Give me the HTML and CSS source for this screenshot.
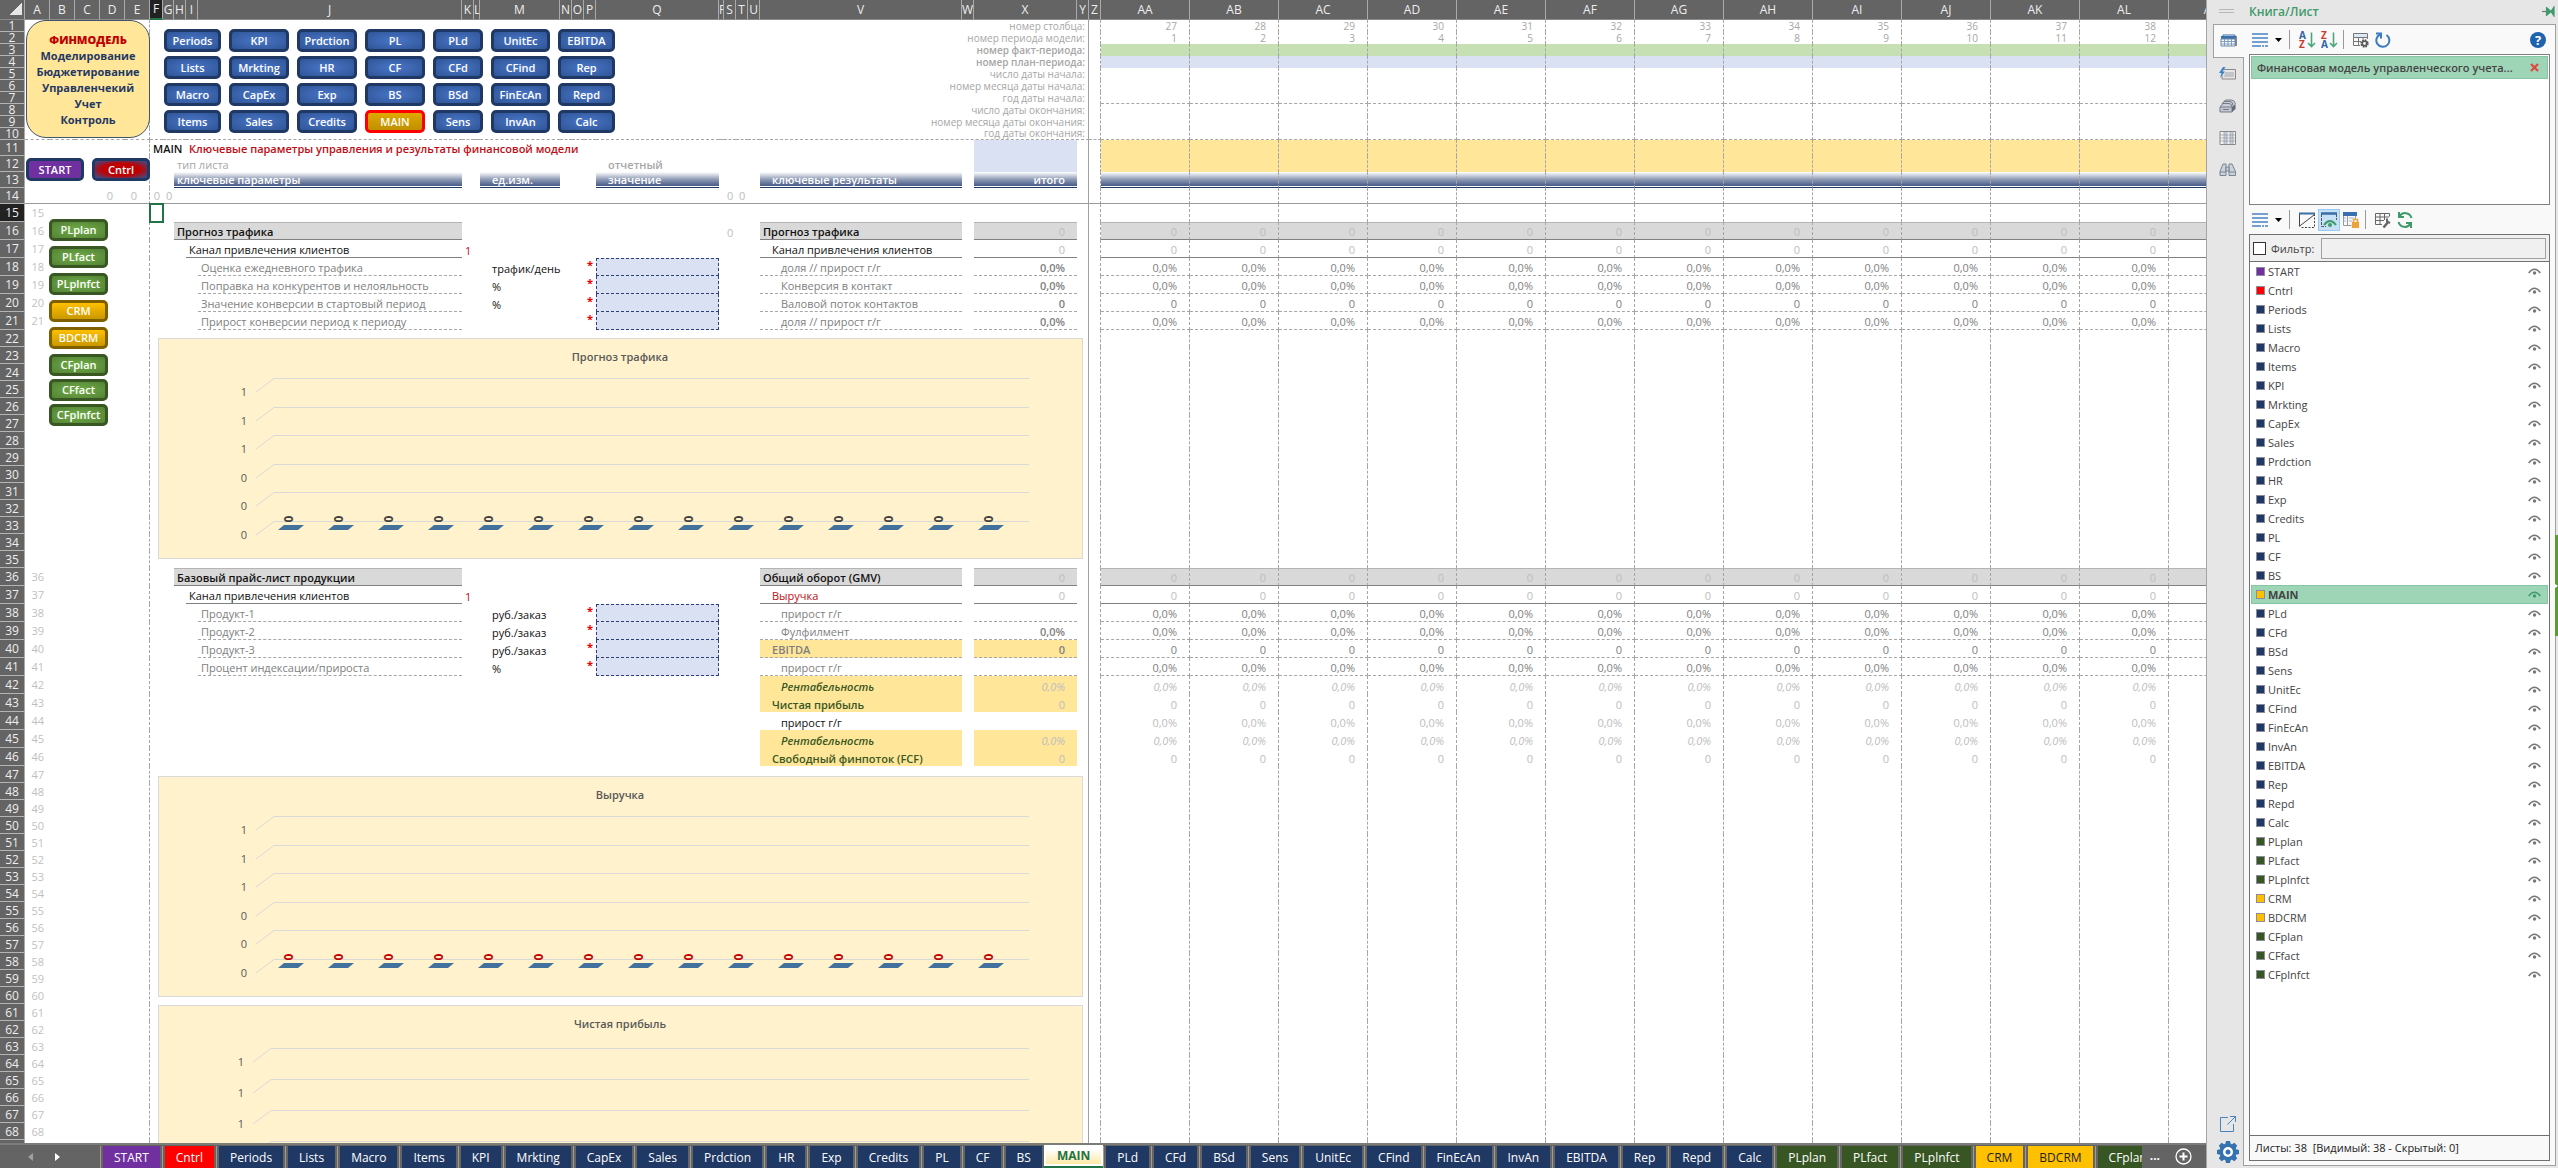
FILE: index.html
```html
<!DOCTYPE html>
<html lang="ru">
<head>
    <meta charset="UTF-8">
    <meta name="viewport" content="width=device-width, initial-scale=1.0">
    <title>Финансовая модель управленческого учета</title>
    <link rel="stylesheet" href="styles.css">
</head>
<body>
    <main class="workbook">
        <div class="sheet">
            <table class="grid">
                <colgroup id="cols"></colgroup>
                <thead><tr id="letters"></tr></thead>
                <tbody id="rows"></tbody>
            </table>

            <!-- shapes floating over the cells -->
            <div class="logo">
                <strong>ФИНМОДЕЛЬ</strong>
                <span>Моделирование</span>
                <span>Бюджетирование</span>
                <span>Управленчекий</span>
                <span>Учет</span>
                <span>Контроль</span>
            </div>
            <nav class="shape-nav" id="shape-nav"></nav>
            <div class="shape-home">
                <button class="shape purple" type="button">START</button>
                <button class="shape red" type="button">Cntrl</button>
            </div>
            <nav class="shape-side">
                <div class="shape-group">
                    <button class="shape green" type="button">PLplan</button>
                    <button class="shape green" type="button">PLfact</button>
                    <button class="shape green" type="button">PLplnfct</button>
                    <button class="shape gold" type="button">CRM</button>
                    <button class="shape gold" type="button">BDCRM</button>
                </div>
                <div class="shape-group close">
                    <button class="shape green" type="button">CFplan</button>
                    <button class="shape green" type="button">CFfact</button>
                    <button class="shape green" type="button">CFplnfct</button>
                </div>
            </nav>
        </div>

        <div class="tabbar">
            <div class="tab-scroll">
                <button type="button" class="dim" aria-label="Назад"><svg width="5" height="8" viewBox="0 0 5 8"><path d="M5 0v8L0 4z"/></svg></button>
                <button type="button" aria-label="Вперед"><svg width="5" height="8" viewBox="0 0 5 8"><path d="M0 0v8l5-4z"/></svg></button>
            </div>
            <nav class="tabs" id="tabs"></nav>
            <span class="more">...</span>
            <button type="button" class="add-sheet" aria-label="Новый лист">
                <svg width="17" height="17" viewBox="0 0 17 17" fill="none" stroke="#fff"><circle cx="8.500" cy="8.500" r="7.500" stroke-width="1.300"/><path d="M4.500 8.500h8M8.500 4.500v8" stroke-width="2"/></svg>
            </button>
        </div>
    </main>

    <aside class="pane">
        <header class="pane-head">
            <span class="grip"></span>
            <h1>Книга/Лист</h1>
            <button type="button" aria-label="Закрепить">
                <svg width="13" height="11" viewBox="0 0 13 11"><path d="M0 5.500h5" stroke="#777" stroke-width="1.200"/><path d="M4.500 1v9M5 2l4 3.500L12 1v9L9 5.500 5 9z" fill="#3f9a6b" stroke="#3f9a6b" stroke-width="1.200"/></svg>
            </button>
        </header>

        <div class="pane-main">
            <div class="rail">
                <button type="button" class="active" aria-label="Книги">
                    <svg width="18" height="16" viewBox="0 0 18 16"><path d="M4 3h13v10H4z" fill="#8a8a8a"/><path d="M3 2h12v10H3z" fill="#fff" stroke="#3a6ea5"/><path d="M1 3h14v3H1z" fill="#3a70b0"/><path d="M1 6h14v7H1z" fill="#fff" stroke="#6f88a5"/><path d="M1 8.500h14M1 11h14M4.500 6v7M8 6v7M11.500 6v7" stroke="#7d9cc0"/></svg>
                </button>
                <button type="button" aria-label="Диапазоны">
                    <svg width="18" height="14" viewBox="0 0 18 14"><path d="M4 2.500h12.500v9.500H3V8" fill="none" stroke="#888"/><path d="M6 5h9v5H5z" fill="#c4c4c8"/><path d="M4 0L0 6h2.500L1 11l5-6.500H3.500L6.500 0z" fill="#3f7fc8"/></svg>
                </button>
                <button type="button" aria-label="Печать">
                    <svg width="18" height="14" viewBox="0 0 18 14"><path d="M5.500 1h7l4 4v5l-3 3H1V8z" fill="#c9ced8"/><path d="M1 8h12v5H1z" fill="#c2c7d2" stroke="#777c88"/><path d="M13 8l3.500-3v5L13 13z" fill="#666b78"/><path d="M1 8l3-3.500h6q3 0 3 3.500M3 5l2-2.500h6q3 0 3 4M5 2.500L6.500 1h6q3 0 4 4" fill="none" stroke="#777c88"/><path d="M4 10.500h6" stroke="#777c88"/></svg>
                </button>
                <button type="button" aria-label="Столбцы">
                    <svg width="18" height="14" viewBox="0 0 18 14"><path d="M1 .5h15.500v13H1z" fill="#f4f4f4" stroke="#888"/><path d="M5 1h3v12H5zM11 1h3v12h-3z" fill="#c3d2e4"/><path d="M1 4h15M1 7h15M1 10h15M5 1v12M8 1v12M11 1v12M14 1v12" stroke="#999" stroke-width=".7"/></svg>
                </button>
                <button type="button" aria-label="Поиск">
                    <svg width="18" height="14" viewBox="0 0 18 14" fill="#c9d3de" stroke="#7b8490"><path d="M1 12.500v-4L4 1h3v11.500zM10 12.500V1h3l3.500 7.500v4z"/><path d="M7 4h3v4H7zM1 9h6M10 9h6.500"/></svg>
                </button>
                <span class="rail-space"></span>
                <button type="button" class="low" aria-label="Открыть">
                    <svg width="18" height="18" viewBox="0 0 18 18" fill="none" stroke="#4a82bd"><path d="M9 2.500H1.500v14h13V9M8.500 9.500l8-8M11 1.500h5.500V7"/></svg>
                </button>
                <button type="button" class="low" aria-label="Настройки">
                    <svg width="24" height="24" viewBox="0 0 24 24"><g fill="#3572b0"><circle cx="12" cy="12" r="8.500"/><path id="cog" d="M10 1h4l1 4H9zM10 23h4l1-4H9z"/><use href="#cog" transform="rotate(45 12 12)"/><use href="#cog" transform="rotate(90 12 12)"/><use href="#cog" transform="rotate(135 12 12)"/></g><circle cx="12" cy="12" r="5" fill="#fff"/><circle cx="12" cy="12" r="2.500" fill="#3572b0"/></svg>
                </button>
            </div>

            <div class="pane-body">
                <div class="toolbar">
                    <button type="button" aria-label="Список"><svg width="16" height="16" viewBox="0 0 16 16" stroke="#4a80c4" stroke-width="1.700"><path d="M0 2h16M0 6h16M0 10h16"/><path d="M0 14h16" stroke-dasharray="9 1 2 1"/></svg></button>
                    <button type="button" class="caret" aria-label="Меню"><svg width="7" height="4" viewBox="0 0 7 4"><path d="M0 0h7L3.500 4z"/></svg></button>
                    <span class="sep"></span>
                    <button type="button" aria-label="По возрастанию"><svg width="17" height="18" viewBox="0 0 17 18"><text class="az blue" x="0" y="8">A</text><text class="az red" x="0" y="17">Z</text><path d="M12.500 1.500v14M9 12l3.500 3.500L16 12" fill="none" stroke="#4aa77c" stroke-width="1.600"/></svg></button>
                    <button type="button" aria-label="По убыванию"><svg width="17" height="18" viewBox="0 0 17 18"><text class="az red" x="0" y="8">Z</text><text class="az blue" x="0" y="17">A</text><path d="M12.500 1.500v14M9 12l3.500 3.500L16 12" fill="none" stroke="#4aa77c" stroke-width="1.600"/></svg></button>
                    <span class="sep"></span>
                    <button type="button" aria-label="Параметры"><svg width="16" height="16" viewBox="0 0 16 16" fill="none" stroke="#777"><path d="M.5 1.500h14v4H.5z" fill="#dbe9f7"/><path d="M.5 5.500v8H7M.5 9.500H8M5.500 5.500v8M10 5.500V7M14.500 5.500V7"/><circle cx="11.500" cy="11.500" r="3.200" stroke="#555" stroke-width="2" stroke-dasharray="1.600 .9"/><circle cx="11.500" cy="11.500" r="2.200" stroke="#555" stroke-width="1.500"/></svg></button>
                    <button type="button" aria-label="Обновить"><svg width="16" height="16" viewBox="0 0 16 16" fill="none" stroke="#3b7cc0" stroke-width="2"><path d="M5 2.500a6.500 6.500 0 1 0 6.500.5"/><path d="M1 1.500h5v5"/></svg></button>
                    <button type="button" class="help" aria-label="Справка">?</button>
                </div>

                <ul class="books">
                    <li>
                        <span>Финансовая модель управленческого учета...</span>
                        <button type="button" aria-label="Закрыть"><svg width="9" height="9" viewBox="0 0 9 9"><path d="M1 1l7 7M8 1L1 8" stroke="#e0483e" stroke-width="2.200"/></svg></button>
                    </li>
                </ul>

                <div class="toolbar">
                    <button type="button" aria-label="Список"><svg width="16" height="16" viewBox="0 0 16 16" stroke="#4a80c4" stroke-width="1.700"><path d="M0 2h16M0 6h16M0 10h16"/><path d="M0 14h16" stroke-dasharray="9 1 2 1"/></svg></button>
                    <button type="button" class="caret" aria-label="Меню"><svg width="7" height="4" viewBox="0 0 7 4"><path d="M0 0h7L3.500 4z"/></svg></button>
                    <span class="sep"></span>
                    <button type="button" aria-label="Скрыть"><svg width="16" height="16" viewBox="0 0 16 16" fill="none" stroke="#444"><path d="M.5 14V2M15.500 2v13.500H1" stroke-dasharray="2 1.500"/><path d="M0 14.500L15 3M.5 14V2"/><path d="M0 1.500h16" stroke="#3a6ea5" stroke-width="2"/></svg></button>
                    <button type="button" class="on" aria-label="Показать"><svg width="16" height="16" viewBox="0 0 16 16" fill="none" stroke="#555"><path d="M.5 2v12.500H5M15.500 2v6" stroke-dasharray="3 1"/><path d="M0 1.500h16" stroke="#3a6ea5" stroke-width="2.500"/><path d="M3 13q6-8 12 0" stroke="#3f9a6b" stroke-width="2"/><circle cx="9" cy="13" r="2" fill="#3f9a6b" stroke="none"/></svg></button>
                    <button type="button" aria-label="Защитить"><svg width="16" height="16" viewBox="0 0 16 16"><path d="M.5 2v11.500h8M4.500 3v10M12.500 3v4" fill="none" stroke="#999"/><path d="M0 0h14v4H0z" fill="#3a70b0"/><path d="M1 6h2M1 9h2M6 6h5M6 9h3" stroke="#9fb8d8"/><path d="M9 10h7v6H9z" fill="#eba43c"/><path d="M10.500 10V7.500h4V10" fill="none" stroke="#eba43c" stroke-width="1.500"/></svg></button>
                    <span class="sep"></span>
                    <button type="button" aria-label="Таблица"><svg width="16" height="16" viewBox="0 0 16 16" fill="none" stroke="#666"><path d="M.5 1.500h14v3M.5 1.500v11H7M.5 5H14M.5 8.500H9M5 1.500v11M9.500 1.500V8"/><path d="M8.500 15.500l5-6" stroke-width="2.500"/><path d="M12 6.500v3l3 1.500" stroke-width="2"/></svg></button>
                    <button type="button" aria-label="Обновить листы"><svg width="16" height="16" viewBox="0 0 16 16" fill="none" stroke="#3f9a6b" stroke-width="2"><path d="M14.500 6A6.500 6.500 0 0 0 2.500 4.500M1.500 10a6.500 6.500 0 0 0 12 1.500"/><path d="M2 0v5h5M14 16v-5H9"/></svg></button>
                </div>

                <div class="sheets-box">
                    <form class="filter">
                        <input type="checkbox" id="filter-on">
                        <label for="filter-on">Фильтр:</label>
                        <input type="text" id="filter-text" aria-label="Текст фильтра">
                    </form>
                    <ul class="sheet-list" id="sheet-list"></ul>
                    <p class="status">Листы: 38&nbsp; [Видимый: 38 - Скрытый: 0]</p>
                </div>
            </div>
        </div>
        <span class="edge-handle"><svg width="3" height="4" viewBox="0 0 3 4"><path d="M0 0l3 2-3 2z" fill="#fff"/></svg></span>
    </aside>
    <script src="script.js"></script>
</body>
</html>
```

FILE: styles.css
```css
* {
    box-sizing: border-box;
}
body {
    margin: 0;
    display: flex;
    height: 100vh;
    overflow: hidden;
    font-family: "Open Sans", "Noto Sans", sans-serif;
    font-size: 11px;
    color: #111;
    background: #fff;
}
button {
    font: inherit;
    color: inherit;
    border: 0;
    padding: 0;
    background: none;
}
svg {
    display: block;
}

/* workbook */
.workbook {
    flex: 1;
    min-width: 0;
    display: flex;
    flex-direction: column;
}
.sheet {
    flex: 1;
    min-height: 0;
    position: relative;
    overflow: hidden;
}
.grid {
    table-layout: fixed;
    width: 1px;
    border-collapse: separate;
    border-spacing: 0;
}
.grid th {
    padding: 0;
    font-size: 12px;
    font-weight: normal;
    color: #eee;
    background: #646464;
    text-align: center;
    white-space: nowrap;
}
.grid thead th {
    height: 19px;
    line-height: 18px;
    border-right: 1px solid #aaa;
    border-bottom: 1px solid #8a8a8a;
    overflow: hidden;
}
.grid thead .corner {
    background: linear-gradient(135deg, #646464 50%, #e6e6e6 50%);
    background-size: 12px 12px;
    background-repeat: no-repeat;
    background-position: 10px 3px;
    background-color: #646464;
}
.grid tbody th {
    line-height: 11px;
    border-bottom: 1px solid #b4b4b4;
    border-right: 1px solid #aaa;
}
.grid thead th.current {
    background: #222;
    border-bottom: 2px solid #217346;
}
.grid tbody th.current {
    background: #222;
}
.grid td {
    padding: 0 3px;
    line-height: 14px;
    vertical-align: bottom;
    white-space: nowrap;
}
.grid td.rownum {
    padding: 0 6px 0 0;
    text-align: right;
    vertical-align: middle;
    color: #bfbfbf;
}
.grid .tiny td {
    font-size: 10px;
    line-height: 11px;
    color: #a6a6a6;
}
.grid td.dash-right {
    border-right: 1px dashed #a6a6a6;
}
.grid td.freeze {
    border-right: 1px solid #a0a0a0;
}
.grid .row-10 td,
.grid .row-7 td.period {
    border-bottom: 1px dashed #a6a6a6;
}
.grid .row-14 td {
    border-bottom: 1px solid #9a9a9a;
}
.grid td.selected {
    outline: 2px solid #217346;
    outline-offset: -1px;
}

/* cell styles */
.grid td.num {
    text-align: right;
    padding-right: 12px;
}
.grid td.tight {
    text-align: right;
    padding-right: 3px;
}
.grid td.ind1 { padding-left: 12px; }
.grid td.ind2 { padding-left: 21px; }
.grid td.b { font-weight: 600; }
.grid td.i { font-style: italic; }
.grid td.light { color: #bdbdbd; }
.grid td.gray { color: #808080; }
.grid td.mid { color: #a6a6a6; }
.grid td.red { color: #c00d14; }
.grid td.green-text { color: #385723; }
.grid td.fill-green { background: #c6e0b4; }
.grid td.fill-blue { background: #d9e1f2; }
.grid td.fill-yellow { background: #ffe699; }
.grid td.head {
    color: #fff;
    font-weight: 600;
    background: linear-gradient(#fff, #8d9ab5 50%, #3c5180);
    border-bottom: 1px solid #1f3864;
    box-shadow: inset 0 -1px #fff;
}
.grid td.group {
    background: #d9d9d9;
    border-top: 1px solid #b4b4b4;
    border-bottom: 1px solid #808080;
}
.grid td.line { border-bottom: 1px solid #808080; }
.grid td.dash { border-bottom: 1px dashed #a6a6a6; }
.grid td.input {
    background: #d9e1f2;
    border: 1px dashed #2f3f78;
    border-top: 0;
}
.grid td.input.first {
    border-top: 1px dashed #2f3f78;
}
.grid td.star {
    color: #e00;
    font-weight: bold;
    padding: 0 3px 0 0;
    text-align: right;
    vertical-align: top;
}

/* charts */
.grid td.chart-cell {
    padding: 8px 5px 9px 8px;
    vertical-align: top;
}
.grid td.chart-cell.low {
    padding: 10px 5px 7px 8px;
}
.grid td.chart-cell.high {
    padding: 1px 5px 0 8px;
}
.chart {
    background: #fff2cc;
    border: 1px solid #d9d9d9;
    font-size: 11px;
    fill: #595959;
}
.chart .title { font-weight: 600; text-anchor: middle; }
.chart .axis { text-anchor: middle; }
.chart .wall { fill: none; stroke: #d9d9d9; }
.chart .bar { fill: #41719c; }
.chart .value {
    font-size: 12px;
    font-weight: bold;
    text-anchor: middle;
    fill: #404040;
}
.chart .value.red { fill: #c00000; }

/* floating shapes */
.logo {
    position: absolute;
    left: 26px;
    top: 20px;
    width: 124px;
    height: 118px;
    display: flex;
    flex-direction: column;
    justify-content: center;
    align-items: center;
    line-height: 16px;
    padding-top: 2px;
    font-weight: bold;
    color: #1f3864;
    background: #ffe699;
    border: 1px solid #44546a;
    border-radius: 20px;
}
.logo strong {
    color: #c00000;
}
.shape-nav {
    position: absolute;
    left: 164px;
    top: 29px;
    display: grid;
    grid-template-columns: 57px 60px 60px 60px 50px 59px 57px;
    grid-auto-rows: 23px;
    gap: 4px 8px;
}
.shape-home {
    position: absolute;
    left: 26px;
    top: 158px;
    display: flex;
    gap: 8px;
}
.shape-home .shape {
    width: 58px;
    height: 23px;
}
.shape-side {
    position: absolute;
    left: 49px;
    top: 219px;
    width: 59px;
    display: flex;
    flex-direction: column;
    gap: 5px;
}
.shape-group {
    display: flex;
    flex-direction: column;
    gap: 5px;
}
.shape-group.close {
    gap: 3px;
}
.shape-group .shape {
    height: 22px;
}
.shape {
    color: #fff;
    font-weight: 600;
    line-height: 14px;
    border: 3px solid #1f3864;
    border-radius: 5px;
    background: radial-gradient(#4a76c8, #2f5597);
}
.shape.purple { background: #7030a0; }
.shape.red { background: radial-gradient(#c00000 50%, #2f5597); }
.shape.green {
    border-color: #385723;
    background: radial-gradient(#70ad47, #548235);
}
.shape.gold {
    border-color: #7f6000;
    background: linear-gradient(#ffc000, #c99700);
}
.shape.here {
    border-color: #f00;
    background: linear-gradient(#e0a800, #bf9000);
}

/* sheet tabs */
.tabbar {
    height: 25px;
    display: flex;
    align-items: stretch;
    background: #646464;
    border-top: 2px solid #7c7c78;
    color: #fff;
    font-size: 12px;
}
.tab-scroll {
    flex: none;
    width: 100px;
    display: flex;
    align-items: center;
    gap: 22px;
    padding-left: 28px;
    fill: #fff;
}
.tab-scroll .dim {
    fill: #a0a0a0;
}
.tabs {
    flex: 1;
    min-width: 0;
    display: flex;
    overflow: hidden;
}
.tabs button {
    flex: none;
    margin-top: 1px;
    padding: 0 13px;
    border-left: 1px solid #a39c8a;
    box-shadow: inset 2px 0 #646464, inset -2px 0 #646464;
    background: #203864;
}
.tabs .purple { background: #7030a0; }
.tabs .red { background: #f00; }
.tabs .green { background: #375623; }
.tabs .gold { background: #ffc000; color: #222; }
.tabs .here {
    margin-top: 0;
    color: #217346;
    font-weight: bold;
    background: linear-gradient(#fff 20%, #ffe699);
    border-left: 0;
    border-bottom: 2px solid #217346;
    box-shadow: inset 0 0 0 2px #fff;
}
.more {
    padding: 2px 0 0 8px;
    font-weight: bold;
}
.add-sheet {
    width: 46px;
    display: flex;
    align-items: center;
    justify-content: center;
}

/* right pane */
.pane {
    flex: none;
    width: 352px;
    position: relative;
    display: flex;
    flex-direction: column;
    padding: 0 2px 2px 6px;
    background: #e6e6e6;
    border-left: 1px solid #a5a5a5;
    color: #444;
}
.pane-head {
    height: 24px;
    display: flex;
    align-items: center;
    padding: 0 1px 2px 6px;
}
.pane-head h1 {
    flex: 1;
    margin: 0 0 0 15px;
    font-size: 12px;
    font-weight: 600;
    color: #3f9a6b;
}
.grip {
    width: 15px;
    height: 4px;
    border-top: 1px solid #b8b8b8;
    border-bottom: 1px solid #b8b8b8;
}
.pane-main {
    flex: 1;
    min-height: 0;
    display: flex;
}
.rail {
    width: 30px;
    display: flex;
    flex-direction: column;
}
.rail button {
    height: 32px;
    display: flex;
    align-items: center;
    justify-content: center;
}
.rail .active {
    height: 34px;
    background: #f9f9f9;
    border: 1px solid #a0a0a0;
    border-right: 0;
    margin-right: -1px;
    z-index: 1;
}
.rail .low {
    height: 28px;
}
.rail-space {
    flex: 1;
}
.pane-body {
    flex: 1;
    min-width: 0;
    display: flex;
    flex-direction: column;
    padding: 0 5px 4px;
    background: #f9f9f9;
    border: 1px solid #a0a0a0;
}
.toolbar {
    height: 29px;
    display: flex;
    align-items: center;
}
.toolbar button {
    width: 22px;
    height: 22px;
    display: flex;
    align-items: center;
    justify-content: center;
}
.toolbar .caret {
    width: 15px;
}
.toolbar .on {
    background: #c5e0f7;
    border: 1px solid #9cc9ef;
}
.toolbar .help {
    width: 16px;
    height: 16px;
    margin: 0 4px 0 auto;
    border-radius: 8px;
    font-size: 13px;
    font-weight: bold;
    color: #fff;
    background: #1f62ae;
}
.sep {
    width: 1px;
    height: 19px;
    margin: 0 6px 0 3px;
    background: #999;
}
.az {
    font-size: 10px;
    font-weight: bold;
}
.az.blue { fill: #2f62a8; }
.az.red { fill: #cc3a2b; }
.books,
.sheet-list {
    margin: 0;
    padding: 1px;
    list-style: none;
}
.books {
    height: 151px;
    background: #fff;
    border: 1px solid #808080;
}
.books li {
    height: 23px;
    display: flex;
    align-items: center;
    justify-content: space-between;
    padding: 0 8px 0 5px;
    font-weight: 600;
    background: #9fd5b7;
    border: 1px solid #86c6a2;
}
.sheets-box {
    flex: 1;
    min-height: 0;
    display: flex;
    flex-direction: column;
    background: #fff;
    border: 1px solid #707070;
}
.filter {
    height: 27px;
    display: flex;
    align-items: center;
    gap: 5px;
    padding: 0 3px;
    background: #f0f0f0;
    border-bottom: 1px solid #707070;
}
.filter input[type="checkbox"] {
    appearance: none;
    width: 13px;
    height: 13px;
    margin: 0;
    background: #fff;
    border: 1px solid #333;
}
.filter input[type="text"] {
    flex: 1;
    min-width: 0;
    height: 21px;
    margin-left: 2px;
    background: #f0f0f0;
    border: 1px solid #a0a0a0;
}
.sheet-list {
    flex: 1;
    min-height: 0;
    padding-top: 0;
    overflow: hidden;
}
.sheet-list li {
    height: 19px;
    display: flex;
    align-items: center;
    gap: 3px;
    padding: 0 7px 0 5px;
}
.sheet-list li::before {
    content: "";
    width: 7px;
    height: 7px;
    border: 1px solid #8c8c9c;
    background: #203864;
}
.sheet-list .purple::before { background: #7030a0; }
.sheet-list .red::before { background: #f00; }
.sheet-list .green::before { background: #375623; }
.sheet-list .gold::before { background: #ffc000; }
.sheet-list .here {
    font-weight: bold;
    background: #9fd5b7;
    box-shadow: inset 0 0 0 1px #86c6a2;
}
.sheet-list .here::before { background: #ffc000; }
.sheet-list button {
    margin-left: auto;
    color: #777;
}
.sheet-list .here button {
    color: #3f9a6b;
}
.status {
    height: 25px;
    margin: 0;
    padding: 0 5px;
    line-height: 24px;
    color: #222;
    background: #f9f9f9;
    border-top: 1px solid #707070;
}
.edge-handle {
    position: absolute;
    right: 0;
    top: 535px;
    width: 3px;
    height: 101px;
    display: flex;
    align-items: center;
    background: #5a9e33;
}
```

FILE: script.js
```javascript
// [name, colour class]
const SHEETS = [
    ["START", "purple"], ["Cntrl", "red"], ["Periods"], ["Lists"], ["Macro"], ["Items"], ["KPI"],
    ["Mrkting"], ["CapEx"], ["Sales"], ["Prdction"], ["HR"], ["Exp"], ["Credits"], ["PL"], ["CF"],
    ["BS"], ["MAIN", "here"], ["PLd"], ["CFd"], ["BSd"], ["Sens"], ["UnitEc"], ["CFind"],
    ["FinEcAn"], ["InvAn"], ["EBITDA"], ["Rep"], ["Repd"], ["Calc"], ["PLplan", "green"],
    ["PLfact", "green"], ["PLplnfct", "green"], ["CRM", "gold"], ["BDCRM", "gold"],
    ["CFplan", "green"], ["CFfact", "green"], ["CFplnfct", "green"]
];

const SHAPES = [
    "Periods", "KPI", "Prdction", "PL", "PLd", "UnitEc", "EBITDA",
    "Lists", "Mrkting", "HR", "CF", "CFd", "CFind", "Rep",
    "Macro", "CapEx", "Exp", "BS", "BSd", "FinEcAn", "Repd",
    "Items", "Sales", "Credits", "MAIN", "Sens", "InvAn", "Calc"
];

const COLS = {
    A: 25, B: 25, C: 25, D: 25, E: 25, F: 13, G: 11, H: 12, I: 12, J: 264, K: 12, L: 6, M: 80,
    N: 12, O: 12, P: 12, Q: 123, R: 5, S: 12, T: 12, U: 12, V: 202, W: 12, X: 103, Y: 12, Z: 12
};
"ABCDEFGHIJKLM".split("").forEach(c => COLS["A" + c] = 89);
const LETTERS = Object.keys(COLS);
const FIRST_PERIOD = LETTERS.indexOf("AA");
const LAST_ROW = 75;

function rowHeight(n) {
    if (n <= 10) return 12;
    if (n <= 14) return 16;
    if (n <= 21 || (n >= 36 && n <= 46)) return 18;
    return 17;
}

// row -> column -> [text, classes, colspan]
const CELLS = {};
function put(row, col, text, cls = "", span = 1) {
    CELLS[row] = CELLS[row] || {};
    CELLS[row][col] = [text, cls, span];
}
// row -> [text or function(index), classes], repeated in every period column
const PERIODS = {};

["номер столбца:", "номер периода модели:", "номер факт-периода:", "номер план-периода:",
    "число даты начала:", "номер месяца даты начала:", "год даты начала:", "число даты окончания:",
    "номер месяца даты окончания:", "год даты окончания:"
].forEach((label, i) => put(i + 1, "V", label, i === 2 || i === 3 ? "tight b" : "tight", 4));

PERIODS[1] = [i => i + 27, "num"];
PERIODS[2] = [i => i + 1, "num"];
PERIODS[3] = ["", "fill-green"];
PERIODS[4] = ["", "fill-blue"];
PERIODS[11] = ["", "fill-yellow"];
PERIODS[12] = ["", "fill-yellow"];
PERIODS[13] = ["", "head"];

put(11, "F", "MAIN", "b", 3);
put(11, "I", "Ключевые параметры управления и результаты финансовой модели", "red b", 9);
put(11, "X", "", "fill-blue");
put(12, "H", "тип листа", "mid", 3);
put(12, "Q", "отчетный", "mid b ind1");
put(12, "X", "", "fill-blue");
put(13, "H", "ключевые параметры", "head", 3);
put(13, "M", "ед.изм.", "head ind1");
put(13, "Q", "значение", "head ind1");
put(13, "V", "ключевые результаты", "head ind1");
put(13, "X", "итого", "head num");
put(14, "D", "0", "num light");
put(14, "E", "0", "num light");
["F", "G", "S", "T"].forEach(c => put(14, c, "0", "tight light"));
put(15, "F", "", "selected");
put(16, "S", "0", "tight light");

function params(row, title, items) {
    put(row, "H", title, "group b", 3);
    put(row + 1, "I", "Канал привлечения клиентов", "line", 2);
    put(row + 1, "K", "1", "red");
    items.forEach(([name, unit], i) => {
        const r = row + 2 + i;
        put(r, "J", name, "gray dash");
        put(r, "M", unit, "ind1");
        put(r, "P", "*", "star");
        put(r, "Q", "", i ? "input" : "input first");
    });
}
params(16, "Прогноз трафика", [
    ["Оценка ежедневного трафика", "трафик/день"],
    ["Поправка на конкурентов и нелояльность", "%"],
    ["Значение конверсии в стартовый период", "%"],
    ["Прирост конверсии период к периоду", ""]
]);
params(36, "Базовый прайс-лист продукции", [
    ["Продукт-1", "руб./заказ"],
    ["Продукт-2", "руб./заказ"],
    ["Продукт-3", "руб./заказ"],
    ["Процент индексации/прироста", "%"]
]);

// row, label, label classes, total, total classes, period value, period classes
[
    [16, "Прогноз трафика", "group b", "0", "group light", "0", "group light"],
    [17, "Канал привлечения клиентов", "ind1 line", "0", "light line", "0", "light line"],
    [18, "доля // прирост г/г", "ind2 gray dash", "0,0%", "b gray dash", "0,0%", "gray dash"],
    [19, "Конверсия в контакт", "ind2 gray dash", "0,0%", "b gray dash", "0,0%", "gray dash"],
    [20, "Валовой поток контактов", "ind2 gray dash", "0", "b gray dash", "0", "gray dash"],
    [21, "доля // прирост г/г", "ind2 gray dash", "0,0%", "b gray dash", "0,0%", "gray dash"],
    [36, "Общий оборот (GMV)", "group b", "0", "group light", "0", "group light"],
    [37, "Выручка", "ind1 red line", "0", "light line", "0", "light line"],
    [38, "прирост г/г", "ind2 gray dash", "", "dash", "0,0%", "gray dash"],
    [39, "Фулфилмент", "ind2 gray dash", "0,0%", "b gray dash", "0,0%", "gray dash"],
    [40, "EBITDA", "ind1 b gray dash fill-yellow", "0", "b gray dash fill-yellow", "0", "gray dash"],
    [41, "прирост г/г", "ind2 gray dash", "", "dash", "0,0%", "gray dash"],
    [42, "Рентабельность", "ind2 b i green-text fill-yellow", "0,0%", "i light fill-yellow", "0,0%", "i light"],
    [43, "Чистая прибыль", "ind1 b green-text fill-yellow", "0", "light fill-yellow", "0", "light"],
    [44, "прирост г/г", "ind2", "", "", "0,0%", "light"],
    [45, "Рентабельность", "ind2 b i green-text fill-yellow", "0,0%", "i light fill-yellow", "0,0%", "i light"],
    [46, "Свободный финпоток (FCF)", "ind1 b green-text fill-yellow", "0", "light fill-yellow", "0", "light"]
].forEach(([row, label, labelCls, total, totalCls, value, valueCls]) => {
    put(row, "V", label, labelCls);
    put(row, "X", total, "num " + totalCls);
    PERIODS[row] = [value, "num " + valueCls];
});

// Empty 3-D column chart: back wall lines, floor tiles and rotated labels
function chart(title, height, left, top, step, valueCls) {
    let body = `<text class="title" x="461" y="22">${title}</text>`;
    ["1", "1", "1", "0", "0", "0"].forEach((label, i) => {
        const y = Math.round(top + i * step);
        body += `<path class="wall" d="M${left - 18} ${y + 14}L${left} ${y + 0.5}H870"/>`;
        body += `<text class="axis" x="${left - 30}" y="${y + 18}">${label}</text>`;
    });
    const floor = Math.round(top + 5 * step) + 4;
    for (let i = 0; i < 15; i++) {
        const x = left + 4 + i * 50;
        const cx = x + 15;
        const cy = floor - 7;
        body += `<path class="bar" d="M${x} ${floor + 5}l6-5h20l-6 5z"/>`;
        body += `<text class="value ${valueCls}" transform="translate(${cx} ${cy + 1}) rotate(-90)">0</text>`;
    }
    return `<svg class="chart" width="100%" height="${height}" role="img" aria-label="${title}">${body}</svg>`;
}
const CHARTS = {
    22: ["chart-cell", chart("Прогноз трафика", 221, 115, 39, 28.5, "")],
    47: ["chart-cell low", chart("Выручка", 221, 115, 39, 28.5, "red")],
    61: ["chart-cell high", chart("Чистая прибыль", 236, 112, 42, 31, "red")]
};
const CHART_ROWS = { 22: 14, 47: 14, 61: 15 };
const CHART_COLS = LETTERS.indexOf("Y") - LETTERS.indexOf("F") + 1;

function inChart(row) {
    return Object.entries(CHART_ROWS).some(([from, n]) => row >= from && row < +from + n);
}

function edge(index) {
    if (index >= LETTERS.indexOf("Z") || index === LETTERS.indexOf("E")) return " dash-right";
    return index === LETTERS.indexOf("Y") ? " freeze" : "";
}

function renderRow(row) {
    const cells = CELLS[row] || {};
    let html = `<th scope="row" class="${row === 15 ? "current" : ""}">${row}</th>`;
    for (let i = 0; i < LETTERS.length;) {
        const col = LETTERS[i];
        if (col === "F" && inChart(row)) {
            if (CHARTS[row]) {
                const [cls, svg] = CHARTS[row];
                html += `<td class="${cls} freeze" colspan="${CHART_COLS}" rowspan="${CHART_ROWS[row]}">${svg}</td>`;
            }
            i += CHART_COLS;
            continue;
        }
        let [text, cls, span] = cells[col] || ["", "", 1];
        if (i >= FIRST_PERIOD) {
            const [value, valueCls] = PERIODS[row] || ["", ""];
            text = typeof value === "function" ? value(i - FIRST_PERIOD) : value;
            cls = "period " + valueCls;
        } else if (col === "A" && ((row >= 15 && row <= 21) || row >= 36)) {
            text = row;
            cls = "rownum";
        }
        html += `<td class="${cls}${edge(i + span - 1)}"${span > 1 ? ` colspan="${span}"` : ""}>${text}</td>`;
        i += span;
    }
    return `<tr class="row-${row}${row <= 10 ? " tiny" : ""}" style="height: ${rowHeight(row)}px">${html}</tr>`;
}

document.getElementById("cols").innerHTML = '<col style="width: 25px">' +
    LETTERS.map(c => `<col style="width: ${COLS[c]}px">`).join("");
document.getElementById("letters").innerHTML = '<th class="corner"></th>' +
    LETTERS.map(c => `<th scope="col" class="${c === "F" ? "current" : ""}">${c}</th>`).join("");
let rowsHtml = "";
for (let row = 1; row <= LAST_ROW; row++) {
    rowsHtml += renderRow(row);
}
document.getElementById("rows").innerHTML = rowsHtml;

document.getElementById("shape-nav").innerHTML = SHAPES.map(name =>
    `<button type="button" class="shape${name === "MAIN" ? " here" : ""}">${name}</button>`).join("");

document.getElementById("tabs").innerHTML = SHEETS.map(([name, cls = ""]) =>
    `<button type="button" class="${cls}">${name}</button>`).join("");

const EYE = '<svg width="13" height="7" viewBox="0 0 13 7"><path d="M.7 5Q6.500-2.500 12.300 5" fill="none" stroke="currentColor" stroke-width="1.500"/><circle cx="6.500" cy="5" r="1.700" fill="currentColor"/></svg>';
document.getElementById("sheet-list").innerHTML = SHEETS.map(([name, cls = ""]) =>
    `<li class="${cls}">${name}<button type="button" aria-label="${name}: видимость">${EYE}</button></li>`).join("");
```
